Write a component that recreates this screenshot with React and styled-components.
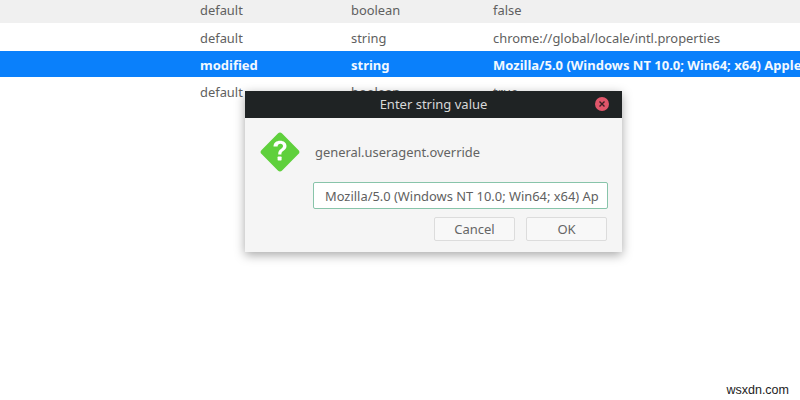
import React from "react";
import styled, { createGlobalStyle } from "styled-components";

const GlobalStyle = createGlobalStyle`
  html, body {
    margin: 0;
    padding: 0;
    background: #fff;
  }
  body {
    font-family: "Noto Sans", sans-serif;
  }
`;

const Page = styled.div`
  position: relative;
  width: 800px;
  height: 400px;
  overflow: hidden;
  background: #fff;
`;

const Row = styled.div`
  box-sizing: border-box;
  display: grid;
  grid-template-columns: 151px 142px 307px;
  align-items: center;
  height: ${(p) => p.$height}px;
  padding: ${(p) => (p.$shaded ? "0 0 4px 200px" : "2px 0 0 200px")};
  font-size: ${(p) => (p.$selected ? 13 : 12.9)}px;
  white-space: nowrap;
  overflow: hidden;
  color: ${(p) => (p.$selected ? "#f2f8ff" : "#5f5f5f")};
  font-weight: ${(p) => (p.$selected ? 700 : 400)};
  background: ${(p) => (p.$selected ? "#0a80fb" : p.$shaded ? "#f0f0f0" : "#fff")};
`;

const Dialog = styled.div`
  position: absolute;
  left: 245px;
  top: 91px;
  width: 377px;
  height: 161px;
  background: #f5f5f5;
  box-shadow: 0 3px 10px rgba(0, 0, 0, 0.35);
  display: flex;
  flex-direction: column;
`;

const TitleBar = styled.div`
  box-sizing: border-box;
  position: relative;
  height: 27px;
  padding-bottom: 2px;
  background: #1f2324;
  color: #d8d8d8;
  font-size: 13px;
  display: flex;
  align-items: center;
  justify-content: center;
`;

const CloseButton = styled.span`
  position: absolute;
  right: 13px;
  top: 6px;
  width: 14px;
  height: 14px;
  border-radius: 50%;
  background: #e0566a;
  display: flex;
  align-items: center;
  justify-content: center;
`;

const Body = styled.div`
  flex: 1;
  display: flex;
  flex-direction: column;
  padding: 14px 14px 0 14px;
`;

const Message = styled.div`
  display: flex;
  align-items: center;
  gap: 14px;
  height: 40px;
  font-size: 12.9px;
  color: #636363;
`;

const TextField = styled.input`
  box-sizing: border-box;
  align-self: flex-end;
  width: 295px;
  height: 27px;
  margin-top: 10px;
  padding: 0 0 0 11px;
  border: 1px solid #88c4aa;
  border-radius: 2px;
  background: #fff;
  color: #5f5f5f;
  font-family: inherit;
  font-size: 12.9px;
  outline: none;
`;

const Actions = styled.div`
  display: flex;
  justify-content: flex-end;
  gap: 11px;
  margin-top: 8px;
  padding-right: 1px;
`;

const Button = styled.button`
  box-sizing: border-box;
  width: 81px;
  height: 24px;
  padding: 0;
  border: 1px solid #dcdcdc;
  border-radius: 2px;
  background: #f8f8f8;
  color: #666;
  font-family: inherit;
  font-size: 13px;
`;

const Watermark = styled.div`
  position: absolute;
  right: 11px;
  bottom: 3px;
  font-family: "Liberation Sans", Arial, sans-serif;
  font-size: 12.5px;
  color: #222;
`;

const QuestionIcon = () => (
  <svg width="42" height="42" viewBox="0 0 42 42">
    <rect x="6.5" y="6.5" width="29" height="29" rx="3" fill="#5fd03c" transform="rotate(45 21 21)" />
    <path
      d="M14.5 15.5c0-3.600 2.800-5.700 6.600-5.700 3.700 0 6.400 2.100 6.400 5.300 0 2.300-1.200 3.500-3 4.700-1.600 1-2.100 1.800-2.100 3.700h-3.200c0-2.900.7-4.200 2.700-5.500 1.400-1 2.100-1.700 2.100-2.900 0-1.400-1-2.300-2.600-2.300-1.600 0-2.700 1-2.800 2.700z"
      fill="#fff"
    />
    <rect x="18.600" y="25.500" width="4" height="4" rx="0.700" fill="#fff" />
  </svg>
);

const CloseIcon = () => (
  <svg width="8" height="8" viewBox="0 0 8 8">
    <path d="M1.500 1.500l5 5M6.500 1.500l-5 5" stroke="#3a1f24" strokeWidth="1.400" />
  </svg>
);

const rows = [
  { status: "default", type: "boolean", value: "false", height: 23, shaded: true },
  { status: "default", type: "string", value: "chrome://global/locale/intl.properties", height: 28 },
  {
    status: "modified",
    type: "string",
    value: "Mozilla/5.0 (Windows NT 10.0; Win64; x64) AppleWebKit/537.36",
    height: 26,
    selected: true,
  },
  { status: "default", type: "boolean", value: "true", height: 28 },
];

export default function App() {
  return (
    <Page>
      <GlobalStyle />
      {rows.map((row, i) => (
        <Row key={i} $height={row.height} $shaded={row.shaded} $selected={row.selected}>
          <span>{row.status}</span>
          <span>{row.type}</span>
          <span>{row.value}</span>
        </Row>
      ))}
      <Dialog>
        <TitleBar>
          Enter string value
          <CloseButton>
            <CloseIcon />
          </CloseButton>
        </TitleBar>
        <Body>
          <Message>
            <QuestionIcon />
            general.useragent.override
          </Message>
          <TextField readOnly value="Mozilla/5.0 (Windows NT 10.0; Win64; x64) Ap" />
          <Actions>
            <Button>Cancel</Button>
            <Button>OK</Button>
          </Actions>
        </Body>
      </Dialog>
      <Watermark>wsxdn.com</Watermark>
    </Page>
  );
}
